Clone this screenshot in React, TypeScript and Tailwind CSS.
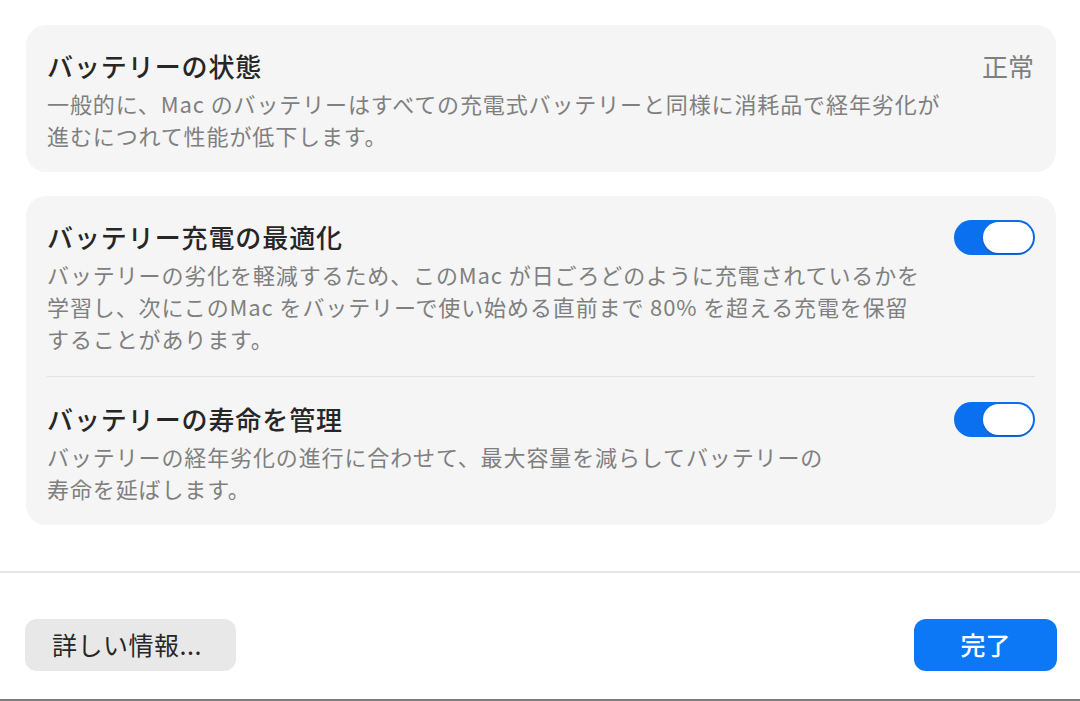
import React, { useState } from 'react';

const FONT = '"Noto Sans CJK JP", "Noto Sans", "Liberation Sans", sans-serif';

function Toggle({ on, onChange }: { on: boolean; onChange: () => void }) {
  return (
    <button
      onClick={onChange}
      className={`relative shrink-0 w-[81px] h-[35px] rounded-full ${on ? 'bg-[#0b70ef]' : 'bg-[#e2e2e2]'}`}
    >
      <span
        className={`absolute top-[2px] h-[31px] w-[50px] rounded-full bg-white shadow-[0_1px_2px_rgba(0,0,0,0.25)] ${on ? 'right-[2px]' : 'left-[2px]'}`}
      />
    </button>
  );
}

function Row({
  title,
  lines,
  right,
}: {
  title: string;
  lines: string[];
  right: React.ReactNode;
}) {
  return (
    <div className="flex justify-between items-start">
      <div>
        <div className="text-[26px] leading-[34px] font-medium tracking-[0.035em] text-[#262626]">{title}</div>
        <div className="mt-[4px] text-[22px] leading-[32px] tracking-[0.04em] text-[#7f7f7f]">
          {lines.map((l, i) => (
            <div key={i} className="whitespace-nowrap">{l}</div>
          ))}
        </div>
      </div>
      {right}
    </div>
  );
}

export default function App() {
  const [optimize, setOptimize] = useState(true);
  const [manage, setManage] = useState(true);

  return (
    <div className="w-[1080px] h-[701px] bg-white flex flex-col" style={{ fontFamily: FONT }}>
      <div className="pl-[26px] pr-[24px] pt-[25px] flex flex-col gap-[24px]">
        {/* バッテリーの状態 */}
        <div className="rounded-[20px] bg-[#f5f5f5] pl-[21px] pr-[22px] pt-[24px] pb-[21px]">
          <Row
            title="バッテリーの状態"
            lines={[
              '一般的に、Mac のバッテリーはすべての充電式バッテリーと同様に消耗品で経年劣化が',
              '進むにつれて性能が低下します。',
            ]}
            right={<div className="text-[26px] leading-[34px] text-[#7f7f7f]">正常</div>}
          />
        </div>

        {/* 充電設定 */}
        <div className="rounded-[20px] bg-[#f5f5f5] px-[21px]">
          <div className="pt-[24px] pb-[22px]">
            <Row
              title="バッテリー充電の最適化"
              lines={[
                'バッテリーの劣化を軽減するため、このMac が日ごろどのように充電されているかを',
                '学習し、次にこのMac をバッテリーで使い始める直前まで 80% を超える充電を保留',
                'することがあります。',
              ]}
              right={<Toggle on={optimize} onChange={() => setOptimize(!optimize)} />}
            />
          </div>
          <div className="h-px bg-[#e2e2e2]" />
          <div className="pt-[25px] pb-[21px]">
            <Row
              title="バッテリーの寿命を管理"
              lines={[
                'バッテリーの経年劣化の進行に合わせて、最大容量を減らしてバッテリーの',
                '寿命を延ばします。',
              ]}
              right={<Toggle on={manage} onChange={() => setManage(!manage)} />}
            />
          </div>
        </div>
      </div>

      <div className="mt-[46px] h-[2px] bg-[#e6e6e6]" />

      <div className="mt-[46px] pl-[25px] pr-[23px] flex justify-between">
        <button className="h-[52px] w-[211px] rounded-[12px] bg-[#e8e8e8] text-[25px] tracking-[0.02em] text-[#262626] text-left pl-[27px]">
          詳しい情報...
        </button>
        <button className="h-[52px] w-[143px] rounded-[12px] bg-[#0d78f5] text-[25px] font-medium text-white">
          完了
        </button>
      </div>

      <div className="mt-auto h-[2px] bg-[#7d7d7d]" />
    </div>
  );
}
